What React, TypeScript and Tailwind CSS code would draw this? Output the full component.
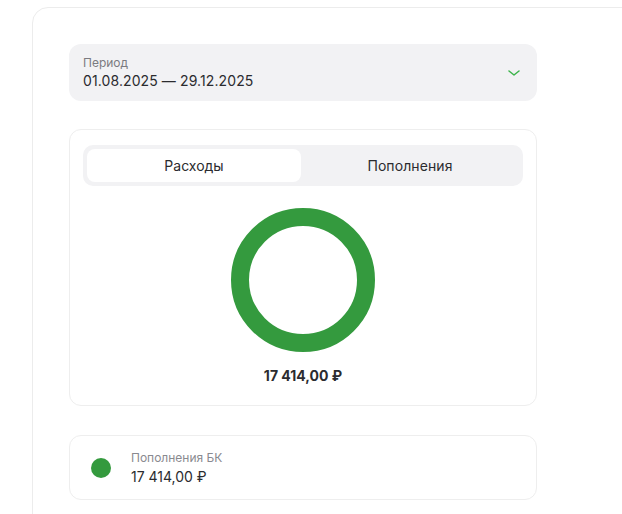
import React from "react";

export default function App() {
  return (
    <div className="h-[514px] bg-white overflow-hidden" style={{ fontFamily: "Inter, 'Noto Sans', sans-serif" }}>
      <div className="ml-[32px] mt-[7px] w-[640px] rounded-[16px] border border-[#ececec] pt-[36px] pl-[36px] pb-[40px]">
        <div className="w-[468px] flex flex-col">
          <div className="h-[57px] rounded-[12px] bg-[#f2f2f4] pl-[14px] pr-[16px] flex items-center justify-between">
            <div className="flex flex-col">
              <span className="text-[12px] leading-[16px] text-[#7b7b80]">Период</span>
              <span className="text-[14px] leading-[20px] text-[#2b2b2f] tracking-[0.1px]">01.08.2025 — 29.12.2025</span>
            </div>
            <svg width="14" height="10" viewBox="0 0 14 10">
              <path d="M2 3 L7 7 L12 3" fill="none" stroke="#3cb44a" strokeWidth="1.5" strokeLinecap="round" strokeLinejoin="round" />
            </svg>
          </div>

          <div className="mt-[28px] h-[277px] rounded-[12px] border border-[#eeeeee] px-[13px] pt-[15px] flex flex-col items-center">
            <div className="w-full h-[41px] rounded-[10px] bg-[#f2f2f4] p-[4px] flex">
              <div className="w-[214px] rounded-[8px] bg-white flex items-center justify-center text-[14px] text-[#2b2b2f]">Расходы</div>
              <div className="flex-1 flex items-center justify-center text-[14px] text-[#2b2b2f] tracking-[0.1px]">Пополнения</div>
            </div>
            <svg width="144" height="144" viewBox="0 0 144 144" className="mt-[22px]">
              <circle cx="72" cy="72" r="63" fill="none" stroke="#349a3e" strokeWidth="18" />
            </svg>
            <div className="mt-[14px] text-[14px] leading-[20px] font-bold text-[#2b2b2f]">17 414,00 ₽</div>
          </div>

          <div className="mt-[29px] h-[65px] rounded-[12px] border border-[#eeeeee] pl-[21px] flex items-center">
            <div className="w-[20px] h-[20px] rounded-full bg-[#349a3e]" />
            <div className="ml-[20px] flex flex-col">
              <span className="text-[12px] leading-[18px] text-[#8a8a8f]">Пополнения БК</span>
              <span className="text-[14px] leading-[20px] text-[#2b2b2f]">17 414,00 ₽</span>
            </div>
          </div>
        </div>
      </div>
    </div>
  );
}
